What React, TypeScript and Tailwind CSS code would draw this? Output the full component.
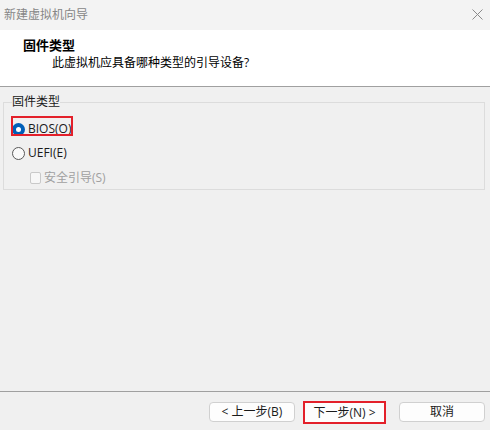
import React from "react";

const font = { fontFamily: '"Open Sans", "Noto Sans CJK SC", sans-serif' };

export default function App() {
  return (
    <div
      className="w-[490px] h-[430px] flex flex-col bg-[#f0f0f0] text-[12px] text-[#1a1a1a] overflow-hidden"
      style={font}
    >
      {/* title bar */}
      <div className="h-[30px] shrink-0 bg-[#f3f3f3] flex items-center justify-between pl-[4px] pr-[7px]">
        <span className="text-[12px] leading-[16px] text-[#868686]">新建虚拟机向导</span>
        <svg width="11" height="11" viewBox="0 0 11 11" className="mt-[-1px]">
          <path d="M0.5 0.5 L10.5 10.5 M10.5 0.5 L0.5 10.5" stroke="#8a8a8a" strokeWidth="1" fill="none" />
        </svg>
      </div>

      {/* header */}
      <div className="h-[57px] shrink-0 bg-white border-b border-[#a0a0a0] flex flex-col pl-[23px] pt-[6px]">
        <div className="text-[13px] leading-[18px] font-bold text-black">固件类型</div>
        <div className="pl-[29px] text-[12px] leading-[17px] text-black">
          此虚拟机应具备哪种类型的引导设备?
        </div>
      </div>

      {/* body */}
      <div className="flex-1 pt-[7px] px-[3px] pr-[5px] border-b border-[#a0a0a0]">
        <fieldset className="border border-[#dcdcdc] pl-[8px] pt-[9px] pb-[1px] flex flex-col gap-[4px]">
          <legend className="text-[12px] leading-[16px] text-[#1a1a1a]">固件类型</legend>
          <div className="relative h-[20px] flex items-center gap-[3px]">
            <span className="w-[13px] h-[13px] rounded-full bg-[#005fb8] flex items-center justify-center">
              <span className="w-[5px] h-[5px] rounded-full bg-white" />
            </span>
            <span>BIOS(O)</span>
            <div className="absolute left-[-1px] top-[-3px] w-[62px] h-[20px] border-2 border-[#e3202a]" />
          </div>
          <div className="h-[20px] flex items-center gap-[3px]">
            <span className="w-[13px] h-[13px] rounded-full border border-[#595959] bg-[#fafafa]" />
            <span>UEFI(E)</span>
          </div>
          <div className="h-[20px] flex items-center gap-[3px] pl-[18px] mt-[1px]">
            <span className="w-[11px] h-[12px] rounded-[2px] border border-[#c9c9c9] bg-[#f7f7f7]" />
            <span className="text-[#a0a0a0]">安全引导(S)</span>
          </div>
        </fieldset>
      </div>

      {/* footer */}
      <div className="h-[38px] shrink-0 flex items-start justify-end pr-[5px] pt-[10px]">
        <button className="w-[86px] h-[20px] rounded-[4px] border border-[#d0d0d0] bg-[#fdfdfd] text-[12px] leading-[18px] text-[#1a1a1a]">
          &lt; 上一步(B)
        </button>
        <button className="ml-[8px] mt-[-1px] w-[83px] h-[23px] border-2 border-[#e3202a] bg-[#fdfdfd] text-[12px] leading-[19px] text-[#1a1a1a]">
          下一步(N) &gt;
        </button>
        <button className="ml-[13px] w-[86px] h-[20px] rounded-[4px] border border-[#d0d0d0] bg-[#fdfdfd] text-[12px] leading-[18px] text-[#1a1a1a]">
          取消
        </button>
      </div>
    </div>
  );
}
